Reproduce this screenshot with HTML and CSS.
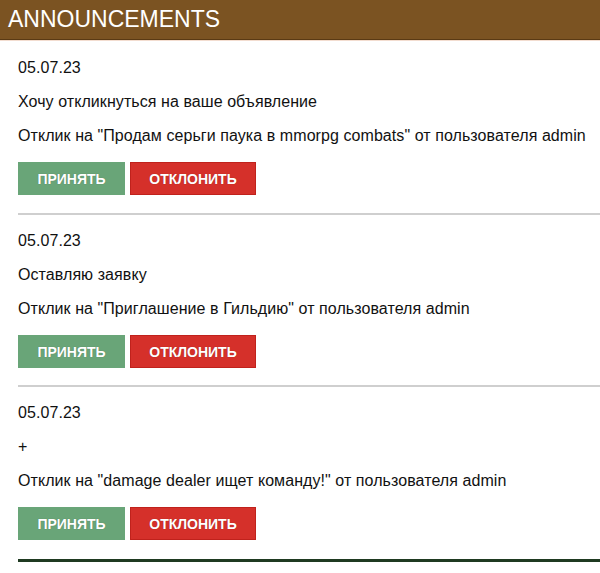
FILE: index.html
```html
<!DOCTYPE html>
<html lang="ru">
<head>
<meta charset="utf-8">
<link rel="stylesheet" href="styles.css">
</head>
<body>
<header class="topbar"><h1 class="title">ANNOUNCEMENTS</h1></header>
<main class="list">
  <section class="item">
    <p class="line">05.07.23</p>
    <p class="line">Хочу откликнуться на ваше объявление</p>
    <p class="line">Отклик на "Продам серьги паука в mmorpg combats" от пользователя admin</p>
    <div class="actions"><button class="btn accept">ПРИНЯТЬ</button><button class="btn reject">ОТКЛОНИТЬ</button></div>
  </section>
  <section class="item">
    <p class="line">05.07.23</p>
    <p class="line">Оставляю заявку</p>
    <p class="line">Отклик на "Приглашение в Гильдию" от пользователя admin</p>
    <div class="actions"><button class="btn accept">ПРИНЯТЬ</button><button class="btn reject">ОТКЛОНИТЬ</button></div>
  </section>
  <section class="item last">
    <p class="line">05.07.23</p>
    <p class="line">+</p>
    <p class="line">Отклик на "damage dealer ищет команду!" от пользователя admin</p>
    <div class="actions"><button class="btn accept">ПРИНЯТЬ</button><button class="btn reject">ОТКЛОНИТЬ</button></div>
  </section>
</main>
</body>
</html>
```
FILE: styles.css
```css
html, body { margin: 0; padding: 0; background: #fff; }
body { font-family: "Liberation Sans", Arial, sans-serif; color: #111; }
.topbar {
  background: #7b5322;
  height: 40px;
  border-bottom: 1px solid #5a3a14;
  box-shadow: 0 1px 0 #f3ddd0;
  box-sizing: border-box;
  display: flex;
  align-items: center;
  padding-left: 8px;
}
.title { margin: 0; font-size: 23px; font-weight: normal; color: #fff; letter-spacing: 0; }
.list { padding-left: 18px; }
.item { padding-top: 16px; border-bottom: 2px solid #cfcfcf; }
.item:first-child { padding-top: 18px; }
.item:first-child .actions { padding-bottom: 18px; }
.item.last { border-bottom: 3px solid #1f3a21; }
.item.last .actions { padding-bottom: 19px; }
.line { margin: 0 0 14px; font-size: 16px; line-height: 20px; letter-spacing: 0.07px; }
.line:nth-of-type(3) { margin-bottom: 16px; }
.actions { display: flex; gap: 5px; padding-bottom: 17px; }
.btn {
  height: 33px;
  border: 1px solid transparent;
  color: #fff;
  font-family: "Liberation Sans", Arial, sans-serif;
  font-weight: bold;
  font-size: 14px;
  padding: 0;
  text-shadow: 0 0 1px rgba(0,0,0,0.3);
  cursor: pointer;
}
.accept { background: #69a578; border-color: #69a578; width: 107px; }
.reject { background: #d5302a; border-color: #c0221c; width: 126px; }
```
